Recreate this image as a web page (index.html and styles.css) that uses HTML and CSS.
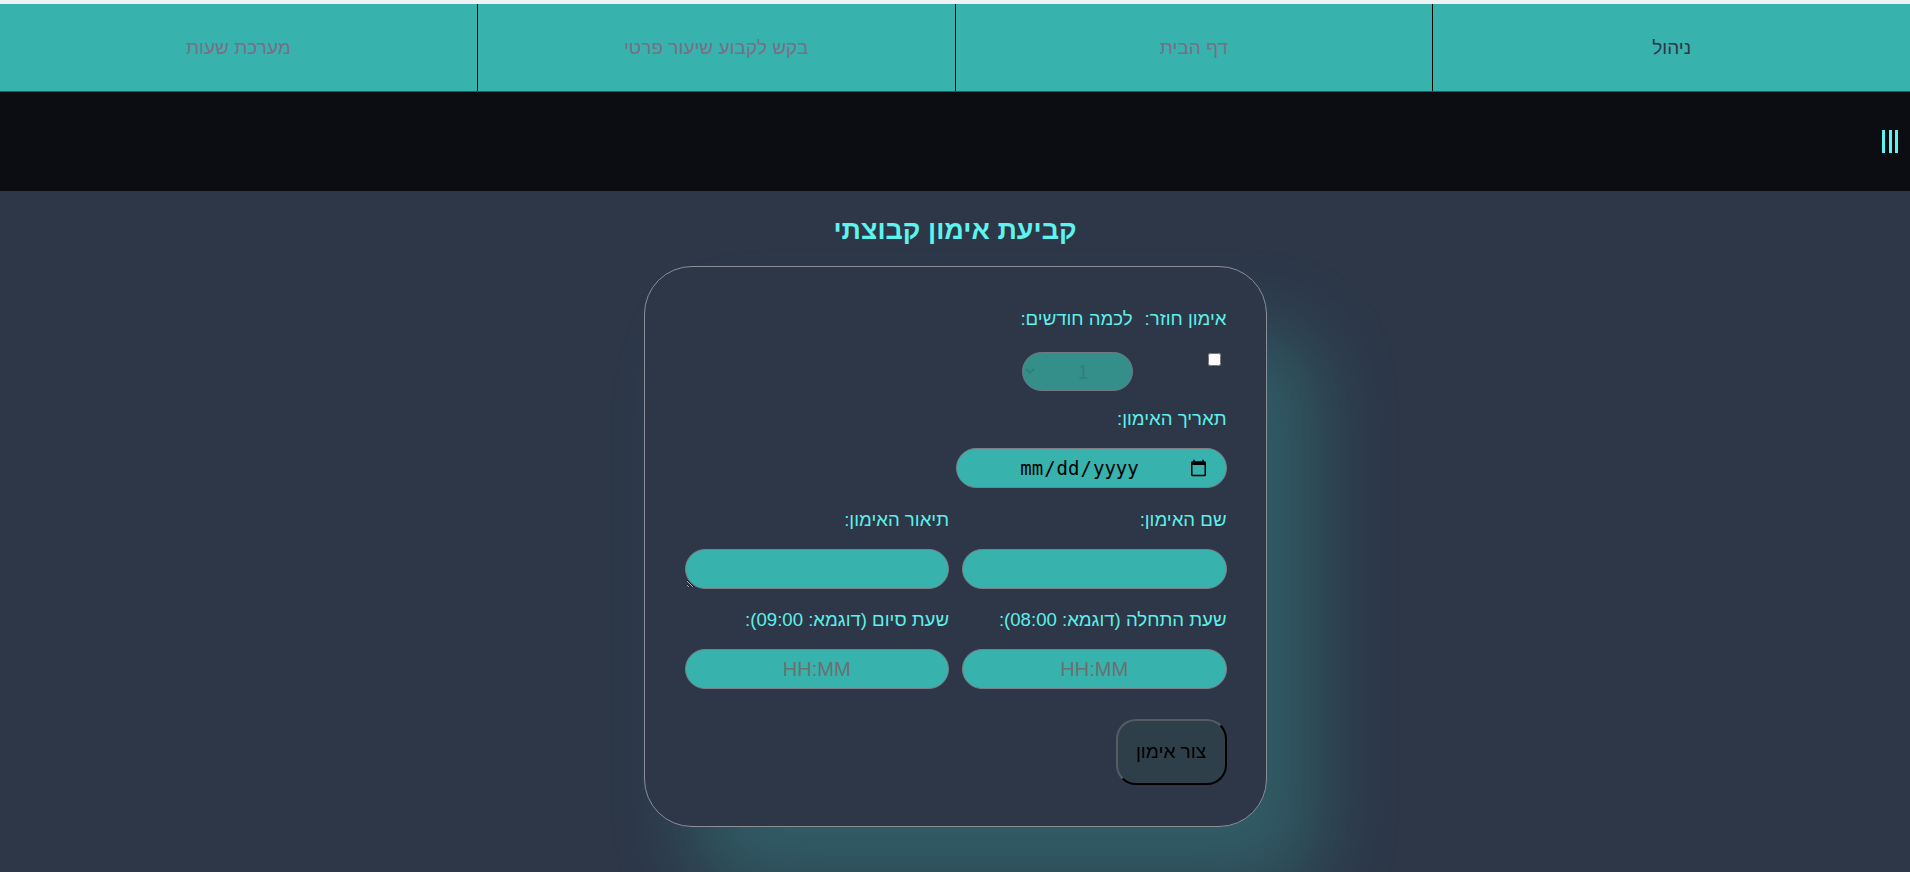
FILE: index.html
```html
<!DOCTYPE html>
<html lang="he" dir="rtl">
<head>
<meta charset="utf-8">
<title>קביעת אימון קבוצתי</title>
<link rel="stylesheet" href="styles.css">
</head>
<body>
<div class="top-strip"></div>
<nav class="nav">
  <ul class="nav-list">
    <li class="nav-item"><a class="nav-link nav-link-active" href="#">ניהול</a></li>
    <li class="nav-item"><a class="nav-link" href="#">דף הבית</a></li>
    <li class="nav-item"><a class="nav-link" href="#">בקש לקבוע שיעור פרטי</a></li>
    <li class="nav-item"><a class="nav-link" href="#">מערכת שעות</a></li>
  </ul>
</nav>
<header class="bar">
  <span class="burger" aria-label="menu"><span class="burger-line"></span><span class="burger-line"></span><span class="burger-line"></span></span>
</header>
<main class="main">
  <h1 class="title">קביעת אימון קבוצתי</h1>
  <form class="card">
    <div class="row-recurring">
      <div class="col">
        <label class="lbl" for="rec">אימון חוזר:</label>
        <input class="check" type="checkbox" id="rec">
      </div>
      <div class="col">
        <label class="lbl" for="months">לכמה חודשים:</label>
        <select class="months" id="months" disabled><option>1</option></select>
      </div>
    </div>
    <div class="group group-date">
      <label class="lbl" for="date">תאריך האימון:</label>
      <input class="field date" type="date" id="date">
    </div>
    <div class="grid2">
      <div class="group">
        <label class="lbl" for="name">שם האימון:</label>
        <input class="field" type="text" id="name">
      </div>
      <div class="group">
        <label class="lbl" for="desc">תיאור האימון:</label>
        <textarea class="field area" id="desc" cols="10" rows="1"></textarea>
      </div>
      <div class="group">
        <label class="lbl" for="start">שעת התחלה (דוגמא: 08:00):</label>
        <input class="field" type="text" id="start" placeholder="HH:MM">
      </div>
      <div class="group">
        <label class="lbl" for="end">שעת סיום (דוגמא: 09:00):</label>
        <input class="field" type="text" id="end" placeholder="HH:MM">
      </div>
    </div>
    <button class="submit" type="button">צור אימון</button>
  </form>
</main>
</body>
</html>
```
FILE: styles.css
```css
* { box-sizing: border-box; }

html, body {
  margin: 0;
  padding: 0;
  height: 100%;
}

body {
  direction: rtl;
  font-family: "Liberation Sans", Arial, sans-serif;
  background: #2d3748;
  display: flex;
  flex-direction: column;
  min-height: 872px;
  overflow: hidden;
}

.top-strip {
  height: 4px;
  background: #eef1f5;
}

.nav {
  background: #38b2ac;
  height: 88px;
  border-bottom: 1px solid #2f5a5e;
}

.nav-list {
  list-style: none;
  margin: 0;
  padding: 0;
  display: flex;
  height: 100%;
}

.nav-item {
  flex: 1 1 0;
  display: flex;
  align-items: center;
  justify-content: center;
  border-left: 1px solid #000;
}

.nav-item:last-child {
  border-left: none;
}

.nav-link {
  font-size: 19px;
  color: #7b6e86;
  text-decoration: none;
}

.nav-link-active {
  color: #2d3748;
}

.bar {
  background: #0b0d12;
  height: 99px;
  display: flex;
  align-items: center;
  justify-content: flex-start;
  padding-right: 12px;
}

.burger {
  display: flex;
  gap: 3.3px;
  height: 23px;
}

.burger-line {
  width: 3px;
  height: 23px;
  background: #5ef3ec;
}

.main {
  flex: 1;
  display: flex;
  flex-direction: column;
  align-items: center;
  background: #2d3748;
}

.title {
  margin: 22px 0 19px;
  font-size: 27px;
  line-height: 34px;
  font-weight: bold;
  color: #5ef3ec;
}

.card {
  width: 623px;
  border: 1px solid #8a8f96;
  border-radius: 48px;
  padding: 41px 39px 41px 40px;
  background: #2d3748;
  box-shadow: 50px 65px 80px rgba(56, 178, 172, 0.3);
  display: flex;
  flex-direction: column;
}

.lbl {
  display: block;
  font-size: 18.6px;
  line-height: 22px;
  color: #5ef0e8;
}

.row-recurring {
  display: flex;
  gap: 12px;
  margin-bottom: 17px;
}

.col {
  display: flex;
  flex-direction: column;
  align-items: flex-start;
  gap: 22px;
}

.check {
  width: 13px;
  height: 13px;
  margin: 1px 6px 0 0;
}

.months {
  width: 111px;
  height: 39px;
  border-radius: 20px;
  border: 1px solid #6f7a80;
  background: #348f8b;
  color: #2f7f7b;
  font-size: 20px;
  padding: 0 14px;
  text-align: center;
  opacity: 1;
}

.group {
  display: flex;
  flex-direction: column;
  align-items: stretch;
  gap: 18px;
  min-width: 0;
}

.group-date {
  align-items: flex-start;
}

.field {
  width: 100%;
  min-width: 0;
  height: 40px;
  border: 1px solid #7a7f85;
  border-radius: 20px;
  background: #38b2ac;
  font-family: "Liberation Sans", Arial, sans-serif;
  font-size: 20px;
  text-align: center;
  color: #111;
  padding: 0 16px;
  margin: 0;
}

.field::placeholder {
  color: #6b7071;
}

.date {
  width: 271px;
  font-family: "DejaVu Sans Mono", monospace;
  font-size: 19px;
  color: #000;
  padding: 0 16px;
}

.area {
  resize: both;
  padding-top: 8px;
  display: block;
}

.grid2 {
  margin-top: 21px;
  display: grid;
  grid-template-columns: minmax(0, 1fr) minmax(0, 1fr);
  column-gap: 13px;
  row-gap: 20px;
}

.submit {
  margin-top: 30px;
  align-self: flex-start;
  width: 111px;
  height: 66px;
  border-radius: 20px;
  border: 2px solid;
  border-color: #555c63 #000 #000 #555c63;
  background: #2e3f4a;
  color: #000;
  font-family: "Liberation Sans", Arial, sans-serif;
  font-size: 19px;
}
```
